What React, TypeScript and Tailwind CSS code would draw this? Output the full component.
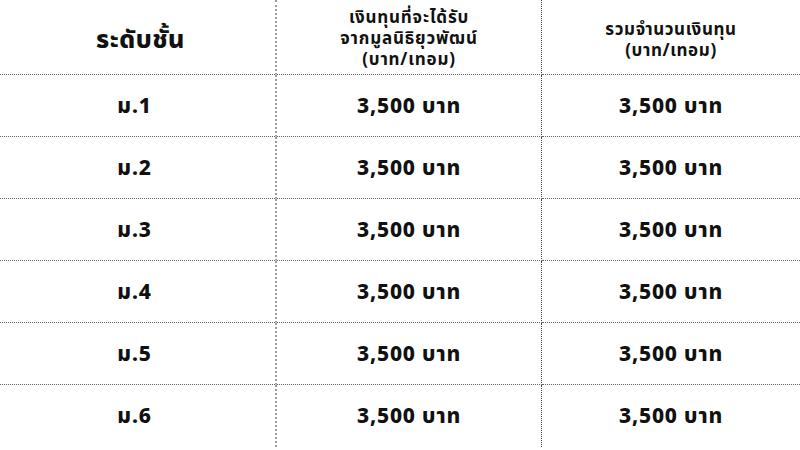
import React from "react";

const rows = ["ม.1", "ม.2", "ม.3", "ม.4", "ม.5", "ม.6"];

export default function App() {
  return (
    <div
      className="w-[800px] h-[450px] overflow-hidden bg-white text-[#111]"
      style={{ fontFamily: '"Noto Sans", "Noto Sans Thai", "Inter", sans-serif' }}
    >
      <div className="grid grid-cols-[277px_265px_1fr]">
        {/* header */}
        <div className="h-[75px] flex items-center justify-center border-b border-dotted border-[#666] border-r-2 border-r-[#9a9a9a]">
          <span className="text-[25px] font-extrabold tracking-[0.5px] pl-[6px] pt-[4px]">ระดับชั้น</span>
        </div>
        <div className="h-[75px] flex flex-col items-center justify-center border-b border-dotted border-[#666] border-r border-r-[#444] text-[17px] font-bold leading-[21px] tracking-[0.8px] text-center">
          <span>เงินทุนที่จะได้รับ</span>
          <span>จากมูลนิธิยุวพัฒน์</span>
          <span>(บาท/เทอม)</span>
        </div>
        <div className="h-[75px] flex flex-col items-center justify-center border-b border-dotted border-[#666] text-[17px] font-bold leading-[21px] tracking-[0.6px] text-center pt-[4px]">
          <span>รวมจำนวนเงินทุน</span>
          <span>(บาท/เทอม)</span>
        </div>

        {rows.map((r, i) => (
          <React.Fragment key={r}>
            <div
              className={`h-[62px] flex items-center justify-center border-dotted border-r-2 border-r-[#9a9a9a] ${
                i < rows.length - 1 ? "border-b border-b-[#666]" : ""
              }`}
            >
              <span className="text-[21px] font-extrabold tracking-[0.8px] pr-[6px]">{r}</span>
            </div>
            <div
              className={`h-[62px] flex items-center justify-center border-dotted border-r border-r-[#444] ${
                i < rows.length - 1 ? "border-b border-b-[#666]" : ""
              }`}
            >
              <span className="text-[21px] font-extrabold tracking-[0.8px]">3,500 บาท</span>
            </div>
            <div
              className={`h-[62px] flex items-center justify-center border-dotted ${
                i < rows.length - 1 ? "border-b border-b-[#666]" : ""
              }`}
            >
              <span className="text-[21px] font-extrabold tracking-[0.8px]">3,500 บาท</span>
            </div>
          </React.Fragment>
        ))}
      </div>
    </div>
  );
}
